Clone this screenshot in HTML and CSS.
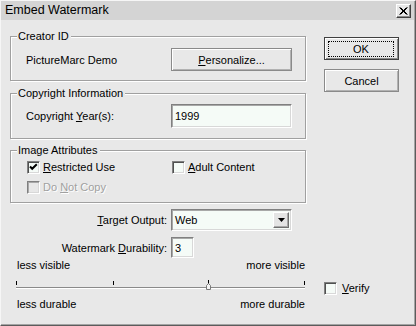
FILE: index.html
```html
<!DOCTYPE html>
<html>
<head>
<meta charset="utf-8">
<link rel="stylesheet" href="styles.css">
</head>
<body>
<div class="dialog">
  <div class="titlebar">
    <span class="title">Embed Watermark</span>
    <span class="close"><svg width="9" height="8" viewBox="0 0 9 8"><path d="M0.5 0.5 L7.5 7.5 M1.5 0.5 L8.5 7.5 M7.5 0.5 L0.5 7.5 M8.5 0.5 L1.5 7.5" stroke="#000" stroke-width="1" fill="none"/></svg></span>
  </div>
  <div class="content">
    <div class="left">
      <div class="group g1">
        <div class="legend">Creator ID</div>
        <div class="row r1">
          <span>PictureMarc Demo</span>
          <div class="btn wide"><u>P</u>ersonalize...</div>
        </div>
      </div>
      <div class="group g2">
        <div class="legend">Copyright Information</div>
        <div class="row r2">
          <span>Copyright <u>Y</u>ear(s):</span>
          <div class="field wide">1999</div>
        </div>
      </div>
      <div class="group g3">
        <div class="legend">Image Attributes</div>
        <div class="row r3">
          <span class="check"><span class="box"><svg width="11" height="11" viewBox="0 0 11 11"><path d="M2 4.5 L4.2 6.8 L8.8 2.2" stroke="#000" stroke-width="2" fill="none"/></svg></span><span><u>R</u>estricted Use</span></span>
          <span class="check"><span class="box"></span><span><u>A</u>dult Content</span></span>
        </div>
        <div class="row r4">
          <span class="check disabled"><span class="box"></span><span>Do <u>N</u>ot Copy</span></span>
        </div>
      </div>
      <div class="row form r5">
        <span class="flabel"><u>T</u>arget Output:</span>
        <div class="field select wide"><span>Web</span><span class="drop"><svg width="7" height="4" viewBox="0 0 7 4"><path d="M0 0 H7 L3.5 4 Z" fill="#000"/></svg></span></div>
      </div>
      <div class="row form r6">
        <span class="flabel">Watermark <u>D</u>urability:</span>
        <div class="field small">3</div>
      </div>
      <div class="scale">
        <span>less visible</span><span>more visible</span>
      </div>
      <svg class="slider" width="296" height="13" viewBox="0 0 296 13">
        <rect x="6" y="3" width="1" height="4" fill="#000"/>
        <rect x="103" y="3" width="1" height="4" fill="#000"/>
        <rect x="198" y="2" width="1" height="4" fill="#000"/>
        <rect x="294" y="3" width="1" height="4" fill="#000"/>
        <rect x="6" y="9" width="289" height="1" fill="#8a8a8a"/>
        <rect x="6" y="10" width="289" height="1" fill="#ffffff"/>
        <path d="M196.5 11.5 V7.5 L198.5 5.5 L200.5 7.5 V11.5 Z" fill="#f4f4f4" stroke="#7a7a7a" stroke-width="1"/>
      </svg>
      <div class="scale s2">
        <span>less durable</span><span>more durable</span>
      </div>
    </div>
    <div class="right">
      <div class="btn default"><span class="focus">OK</span></div>
      <div class="btn cancel">Cancel</div>
      <span class="check verify"><span class="box"></span><span><u>V</u>erify</span></span>
    </div>
  </div>
</div>
</body>
</html>
```

FILE: styles.css
```css
* { box-sizing: border-box; }
html, body { margin: 0; padding: 0; }
body {
  width: 416px;
  height: 326px;
  overflow: hidden;
  background: #e8e8e8;
  font-family: "Liberation Sans", Arial, sans-serif;
  font-size: 11px;
  color: #000;
}
u { text-decoration: underline; text-underline-offset: 1px; }

.dialog {
  width: 416px;
  height: 326px;
  border: 1px solid;
  border-color: #f6f6f6 #5c5c5c #5c5c5c #f6f6f6;
  padding: 0 1px 1px 0;
  box-shadow: inset -1px -1px 0 #a4a4a4;
  background: #e8e8e8;
  display: flex;
  flex-direction: column;
}

.titlebar {
  height: 19px;
  flex: none;
  background: #d4d4d4;
  display: flex;
  align-items: center;
  justify-content: space-between;
  padding: 0 3px 0 4px;
}
.title { font-size: 12.5px; line-height: 15px; }
.close {
  width: 15px;
  height: 14px;
  margin-top: 1px;
  display: flex;
  align-items: center;
  justify-content: center;
  background: #e8e8e8;
  border: 1px solid;
  border-color: #ffffff #404040 #404040 #ffffff;
  box-shadow: inset -1px -1px 0 #8c8c8c;
}

.content {
  flex: 1;
  display: flex;
  gap: 18px;
  padding: 16px 0 0 9px;
}
.left {
  width: 296px;
  display: flex;
  flex-direction: column;
}
.right {
  width: 75px;
  display: flex;
  flex-direction: column;
}

.group {
  border: 1px solid #a0a0a0;
  box-shadow: inset 1px 1px 0 #ffffff, 1px 1px 0 #ffffff;
  padding: 0 0 0 15px;
  display: flex;
  flex-direction: column;
}
.legend {
  align-self: flex-start;
  margin: -7px 0 0 -9px;
  padding: 0 2px 0 1px;
  line-height: 13px;
  background: #e8e8e8;
}
.g1 { padding-bottom: 9px; }
.g2 { margin-top: 12px; padding-bottom: 10px; }
.g3 { margin-top: 11px; padding-bottom: 8px; }

.row {
  display: grid;
  grid-template-columns: 145px 121px;
  align-items: center;
}
.r1 { margin-top: 5px; height: 23px; }
.r2 { margin-top: 4px; height: 24px; }
.r3 { margin-top: 4px; height: 13px; }
.r4 { margin-top: 7px; height: 13px; }

.form { grid-template-columns: 161px auto; justify-items: start; }
.form .flabel { justify-self: end; padding-right: 4px; }
.r5 { margin-top: 6px; height: 22px; }
.r6 { margin-top: 6px; height: 21px; }

.btn {
  height: 23px;
  display: flex;
  align-items: center;
  justify-content: center;
  background: #e8e8e8;
  border: 1px solid #8a8a8a;
  box-shadow: inset 1px 1px 0 #ffffff, inset -1px -1px 0 #b2b2b2;
}
.wide { width: 121px; }
.default {
  margin-top: 1px;
  border: 1px solid #404040;
  box-shadow: inset 1px 1px 0 #ffffff, inset -1px -1px 0 #8a8a8a;
  padding: 3px 4px 2px 3px;
  align-items: stretch;
}
.focus {
  flex: 1;
  border: 1px dotted #000;
  display: flex;
  align-items: center;
  justify-content: center;
}
.cancel { margin-top: 9px; }

.field {
  height: 100%;
  background: #f5fbf7;
  border: 1px solid;
  border-color: #808080 #ffffff #ffffff #808080;
  box-shadow: inset 1px 1px 0 #a8a8a8, inset -1px -1px 0 #d8d8d8;
  padding: 0 3px;
  display: flex;
  align-items: center;
}
.small { width: 23px; }
.select { justify-content: space-between; padding: 2px 2px 2px 3px; align-items: stretch; }
.select > span:first-child { display: flex; align-items: center; }
.drop {
  width: 16px;
  display: flex;
  align-items: center;
  justify-content: center;
  background: #e4e4e4;
  border: 1px solid;
  border-color: #ffffff #707070 #707070 #ffffff;
  box-shadow: inset -1px -1px 0 #a8a8a8;
}

.check {
  display: flex;
  align-items: center;
  gap: 3px;
  line-height: 13px;
}
.g3 .check { margin-left: 1px; }
.box {
  width: 13px;
  height: 13px;
  flex: none;
  background: #f5fbf7;
  border: 1px solid;
  border-color: #808080 #ffffff #ffffff #808080;
  box-shadow: inset 1px 1px 0 #505050, inset -1px -1px 0 #d8d8d8;
  display: flex;
  align-items: center;
  justify-content: center;
}
.disabled { color: #a0a0a0; text-shadow: 1px 1px 0 #ffffff; }
.disabled .box {
  background: #e8e8e8;
  box-shadow: inset 1px 1px 0 #a8a8a8, inset -1px -1px 0 #d8d8d8;
}
.verify { margin-top: auto; margin-bottom: 29px; gap: 5px; }

.scale {
  display: flex;
  justify-content: space-between;
  padding: 0 1px 0 7px;
  line-height: 13px;
  margin-top: 1px;
}
.slider { display: block; margin-top: 6px; }
.s2 { margin-top: 7px; }
```
